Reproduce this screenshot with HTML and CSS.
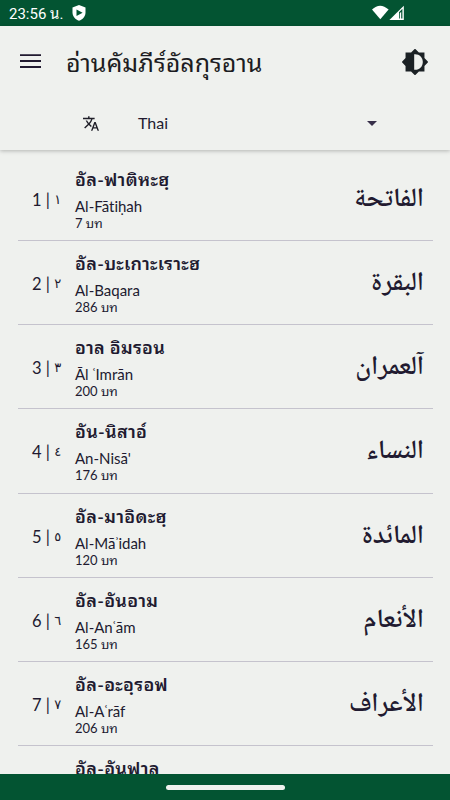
FILE: index.html
```
<!DOCTYPE html>
<html lang="th">
<head>
    <meta charset="UTF-8" />
    <meta name="viewport" content="width=device-width, initial-scale=1" />
    <title>อ่านคัมภีร์อัลกุรอาน</title>
    <link rel="stylesheet" href="styles.css">
</head>
<body>

    <div class="status-bar">
        <span class="clock">23:56 น.</span>
        <svg class="shield" width="14" height="16" viewBox="0 0 14 16">
            <path fill="#fff" d="M7 0 13.5 2.6V7.5C13.5 11.6 10.5 14.6 7 15.8 3.5 14.6.5 11.6.5 7.5V2.6Z"/>
            <path fill="#035432" d="M4.5 4.4 10.6 7.7 4.5 11Z"/>
        </svg>
        <svg class="signal" width="33" height="16" viewBox="0 0 33 16">
            <path fill="#fff" d="M0 4.5Q8-3.2 16.6 4.5L8.3 14.3Z"/>
            <path fill="#fff" d="M31.8.8V15H17.4Z"/>
            <path fill="#035432" d="M27 7.2 30.4 3.8V13.4H29.2V6.8L27.8 8.2V13.4H27Z"/>
        </svg>
    </div>

    <header>
        <div class="title-row">
            <svg class="menu" width="21" height="15" viewBox="0 0 21 15">
                <path fill="#211a30" d="M0 .2H21V2.1H0ZM0 6.1H21V8H0ZM0 12H21V13.9H0Z"/>
            </svg>
            <h1>อ่านคัมภีร์อัลกุรอาน</h1>
            <svg class="theme" width="26" height="26" viewBox="1 1 22 22">
                <path fill="#1b2124" d="M20 15.31 23.31 12 20 8.69V4h-4.69L12 .69 8.69 4H4v4.69L.69 12 4 15.31V20h4.69L12 23.31 15.31 20H20Z"/>
                <path fill="#eff1ee" d="M11.3 5.4C15.6 5 18.6 8 18.6 12S15.6 19 11.3 18.6Z"/>
            </svg>
        </div>
        <div class="language">
            <svg width="16" height="15" viewBox="1 2 22 20">
                <path fill="#1f1f28" d="m12.87 15.07-2.54-2.51.03-.03A17.52 17.52 0 0 0 14.07 6H17V4h-7V2H8v2H1v1.99h11.17C11.5 7.92 10.44 9.75 9 11.35 8.07 10.32 7.3 9.19 6.69 8h-2c.73 1.63 1.73 3.17 2.98 4.56l-5.09 5.02L4 19l5-5 3.11 3.11zM18.5 10h-2L12 22h2l1.12-3h4.75L21 22h2zm-2.62 7 1.62-4.33L19.12 17z"/>
            </svg>
            <span class="language-name">Thai</span>
            <span class="caret"></span>
        </div>
    </header>

    <main>
        <div class="sura">
            <div class="number">1 | <span>١</span></div>
            <div class="names"><h2>อัล-ฟาติหะฮฺ</h2><p>Al-Fātiḥah</p><small>7 บท</small></div>
            <div class="arabic" lang="ar" dir="rtl">الفاتحة</div>
        </div>
        <div class="sura">
            <div class="number">2 | <span>٢</span></div>
            <div class="names"><h2>อัล-บะเกาะเราะฮ</h2><p>Al-Baqara</p><small>286 บท</small></div>
            <div class="arabic" lang="ar" dir="rtl">البقرة</div>
        </div>
        <div class="sura">
            <div class="number">3 | <span>٣</span></div>
            <div class="names"><h2>อาล อิมรอน</h2><p>Āl ʿImrān</p><small>200 บท</small></div>
            <div class="arabic" lang="ar" dir="rtl">آلعمران</div>
        </div>
        <div class="sura">
            <div class="number">4 | <span>٤</span></div>
            <div class="names"><h2>อัน-นิสาอ์</h2><p>An-Nisā'</p><small>176 บท</small></div>
            <div class="arabic" lang="ar" dir="rtl">النساء</div>
        </div>
        <div class="sura">
            <div class="number">5 | <span>٥</span></div>
            <div class="names"><h2>อัล-มาอิดะฮฺ</h2><p>Al-Māʾidah</p><small>120 บท</small></div>
            <div class="arabic" lang="ar" dir="rtl">المائدة</div>
        </div>
        <div class="sura">
            <div class="number">6 | <span>٦</span></div>
            <div class="names"><h2>อัล-อันอาม</h2><p>Al-Anʿām</p><small>165 บท</small></div>
            <div class="arabic" lang="ar" dir="rtl">الأنعام</div>
        </div>
        <div class="sura">
            <div class="number">7 | <span>٧</span></div>
            <div class="names"><h2>อัล-อะอฺรอฟ</h2><p>Al-Aʿrāf</p><small>206 บท</small></div>
            <div class="arabic" lang="ar" dir="rtl">الأعراف</div>
        </div>
        <div class="sura">
            <div class="names"><h2>อัล-อันฟาล</h2></div>
        </div>
    </main>

    <footer>
        <div class="home-handle"></div>
    </footer>

</body>
</html>
```

FILE: styles.css
```
* {
    box-sizing: border-box;
}

body {
    margin: 0;
    height: 800px;
    display: flex;
    flex-direction: column;
    overflow: hidden;
    background-color: #eff1ee;
    color: #211a30;
    font-family: Lato, "Noto Sans Thai Looped", Loma, Garuda, Waree, "Noto Serif Thai", "Noto Sans Thai", "Noto Sans", sans-serif;
}

h1, h2, p {
    margin: 0;
}

svg {
    display: block;
    flex: none;
}

.status-bar {
    flex: none;
    height: 26px;
    display: flex;
    align-items: center;
    padding: 0 45px 0 9px;
    background-color: #035432;
    color: white;
    font: 15px/26px Roboto, "Noto Sans Thai Looped", Loma, Garuda, Waree, "Noto Sans Thai", sans-serif;
}

.clock {
    width: 63px;
    white-space: nowrap;
    padding-top: 2px;
}

.signal {
    margin-left: auto;
}

header {
    flex: none;
    height: 124px;
    box-shadow: 0 1px 4px rgba(0,0,0,0.25);
}

.title-row {
    height: 71px;
    display: flex;
    align-items: center;
    padding: 0 22px 0 20px;
}

h1 {
    margin-left: 25px;
    font-size: 25px;
    font-weight: 400;
    line-height: 40px;
    white-space: nowrap;
    color: #1c1c22;
}

.theme {
    margin-left: auto;
}

.language {
    height: 52px;
    display: flex;
    align-items: center;
    padding: 0 73px 0 83px;
}

.language-name {
    margin-left: 39px;
    line-height: 24px;
    padding-bottom: 1px;
    font-size: 16px;
}

.caret {
    margin-left: auto;
    border: 5px solid transparent;
    border-top-color: #38304a;
    border-bottom: 0;
}

main {
    flex: 1;
    min-height: 0;
    overflow: hidden;
    padding: 7px 17px 0 18px;
}

.sura {
    height: 84.15px;
    display: flex;
    border-bottom: 1px solid #c5c3cd;
}

.number {
    width: 57px;
    padding: 31px 0 0 14px;
    font-size: 16.5px;
    line-height: 24px;
    white-space: nowrap;
}

.number span {
    position: relative;
    top: -2px;
    font-family: "DejaVu Sans", sans-serif;
    font-size: 13px;
}

.names {
    padding-top: 9px;
    white-space: nowrap;
}

.sura:last-child .names {
    margin-left: 57px;
}

.names h2 {
    font-size: 18px;
    font-weight: 600;
    line-height: 26px;
    letter-spacing: 0.3px;
}

.names p {
    margin-top: 1px;
    font-size: 15px;
    line-height: 26px;
    font-variant-ligatures: none;
}

.names small {
    display: block;
    font-size: 13px;
    line-height: 9px;
}

.arabic {
    margin-left: auto;
    padding: 24px 9px 0 0;
    font-family: "Noto Naskh Arabic", "Noto Sans Arabic", "DejaVu Sans", sans-serif;
    font-size: 26.5px;
    font-weight: 600;
    line-height: 40px;
    white-space: nowrap;
}

footer {
    flex: none;
    height: 26px;
    display: flex;
    align-items: center;
    justify-content: center;
    background-color: #035432;
}

.home-handle {
    width: 119px;
    height: 5px;
    border-radius: 3px;
    background-color: #eff1ee;
}
```
